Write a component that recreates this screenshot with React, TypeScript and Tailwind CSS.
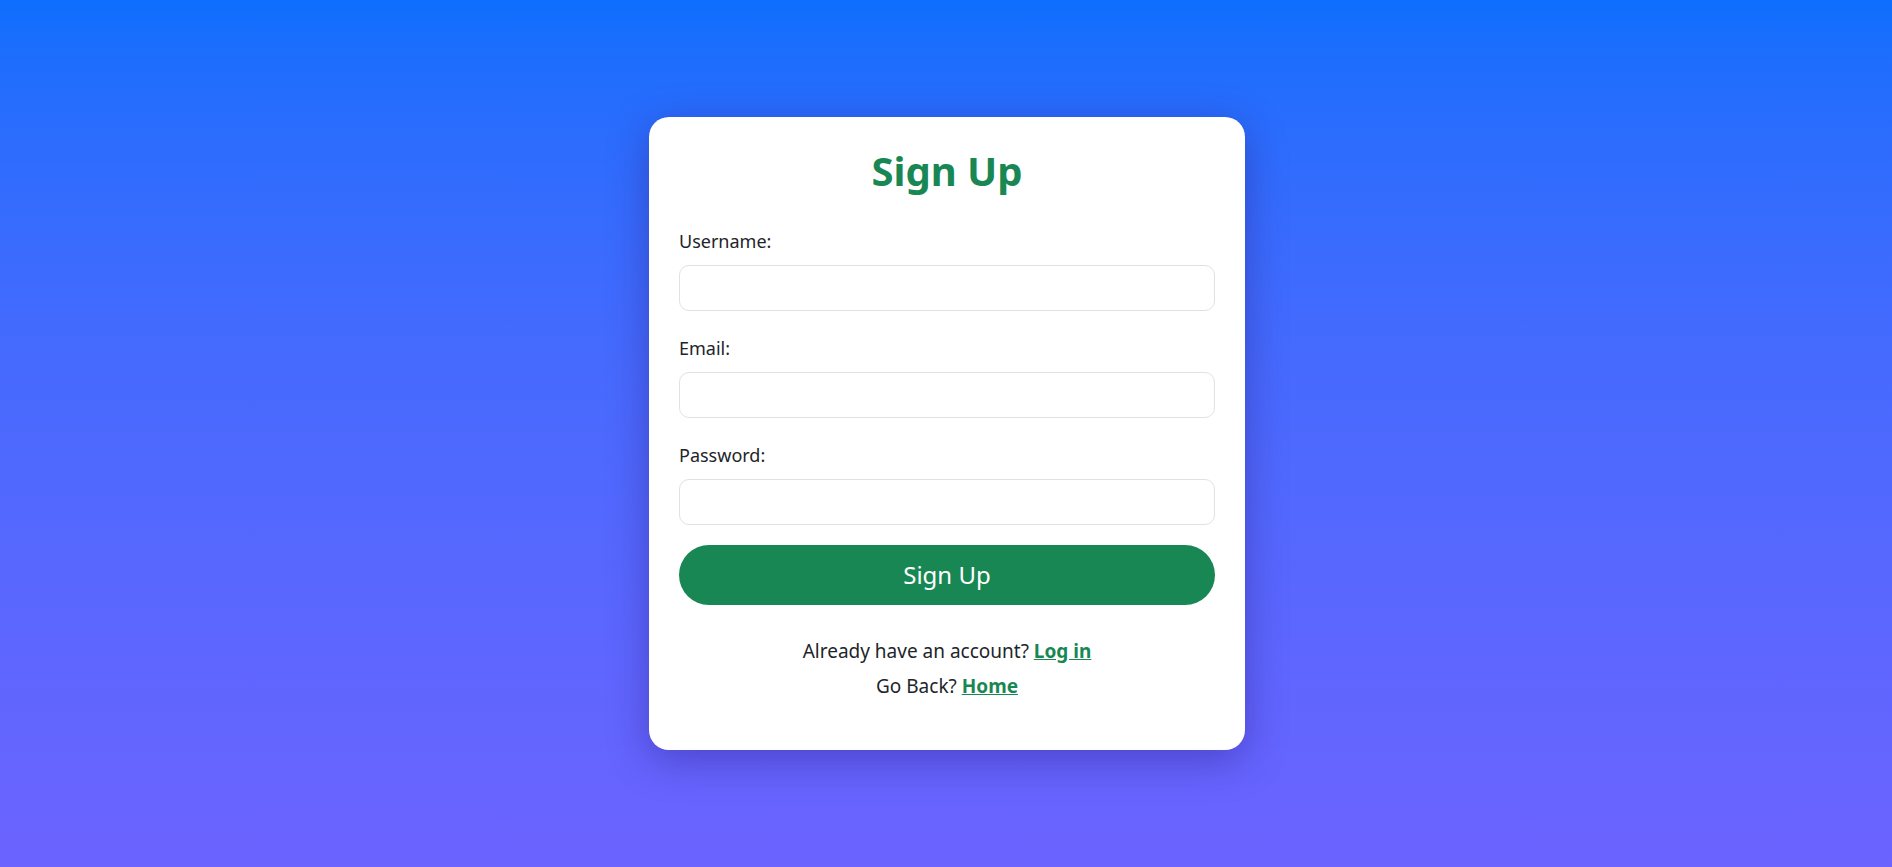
export default function App() {
  return (
    <div
      className="min-h-screen w-full flex items-center justify-center bg-gradient-to-b from-[#0d6efd] to-[#6c63ff] text-[#212529]"
      style={{ fontFamily: '"Noto Sans", "Open Sans", sans-serif' }}
    >
      <div className="w-[596px] ml-[2px] bg-white rounded-[20px] p-[30px] pb-[52px] shadow-[0_10px_40px_rgba(40,20,120,0.4)]">
        <h1 className="text-center text-[40px] leading-[48px] font-bold text-[#198754] mb-[34px]">Sign Up</h1>

        <form onSubmit={(e) => e.preventDefault()}>
          <div className="mb-[25px]">
            <label className="block text-[18px] leading-[24px]">Username:</label>
            <input
              type="text"
              className="mt-[12px] block w-full h-[46px] rounded-[10px] border border-[#dee2e6] px-3 outline-none"
            />
          </div>
          <div className="mb-[25px]">
            <label className="block text-[18px] leading-[24px]">Email:</label>
            <input
              type="email"
              className="mt-[12px] block w-full h-[46px] rounded-[10px] border border-[#dee2e6] px-3 outline-none"
            />
          </div>
          <div className="mb-[20px]">
            <label className="block text-[18px] leading-[24px]">Password:</label>
            <input
              type="password"
              className="mt-[12px] block w-full h-[46px] rounded-[10px] border border-[#dee2e6] px-3 outline-none"
            />
          </div>
          <button
            type="submit"
            className="w-full h-[60px] rounded-full bg-[#198754] text-white text-[24px]"
          >
            Sign Up
          </button>
        </form>

        <div className="mt-[34px] text-center text-[19px] leading-[24px]">
          <p>
            Already have an account?{' '}
            <a href="#" className="font-bold text-[#198754] underline">
              Log in
            </a>
          </p>
          <p className="mt-[11px]">
            Go Back?{' '}
            <a href="#" className="font-bold text-[#198754] underline">
              Home
            </a>
          </p>
        </div>
      </div>
    </div>
  );
}
